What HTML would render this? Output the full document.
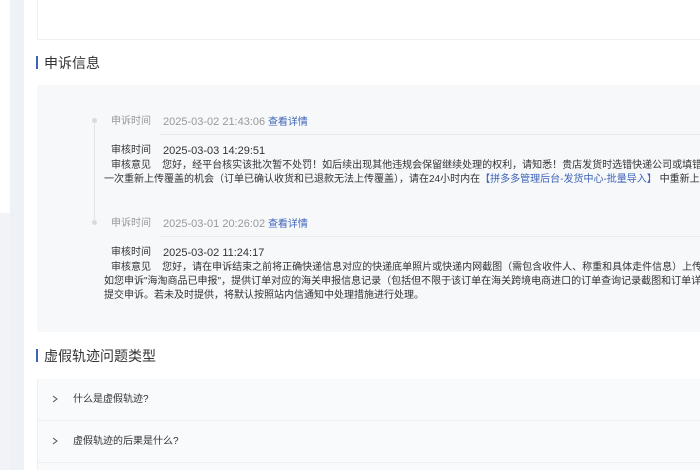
<!DOCTYPE html>
<html><head><meta charset="utf-8"><style>
*{margin:0;padding:0;box-sizing:border-box}
body{width:700px;height:470px;overflow:hidden;background:#fff;font-family:"Liberation Sans","Noto Sans CJK SC",sans-serif;position:relative}
.a{position:absolute;white-space:nowrap}
.t{font-size:10px;color:#333;line-height:12px}
.d{font-size:11px}
.g{color:#999}
.b{color:#3d63b8}
</style></head><body>
<div class="a" style="left:0;top:213px;width:10px;height:257px;background:#f1f3f6"></div>
<div class="a" style="left:10px;top:0;width:14px;height:470px;background:#eef1f6"></div>
<div class="a" style="left:37px;top:0;width:663px;height:40px;background:#fff;border:1px solid #eef0f3;border-top:none;border-right:none"></div>
<div class="a" style="left:36px;top:56px;width:2px;height:13px;background:#3d63b8"></div>
<div class="a" style="left:44px;top:53px;font-size:14px;color:#333">申诉信息</div>
<div class="a" style="left:37px;top:85px;width:663px;height:247px;background:#f7f8fa"></div>
<div class="a" style="left:94px;top:120px;width:1px;height:102px;background:#e2e4e8"></div>
<div class="a" style="left:92px;top:118px;width:5px;height:5px;border-radius:50%;background:#d8dade"></div>
<div class="a" style="left:92px;top:220px;width:5px;height:5px;border-radius:50%;background:#d8dade"></div>
<div class="a" style="left:160px;top:134px;width:540px;height:1px;background:#eaebee"></div>
<div class="a" style="left:160px;top:236px;width:540px;height:1px;background:#eaebee"></div>

<div class="a t g" style="left:111px;top:116px">申诉时间</div>
<div class="a t g" style="left:163px;top:116px"><span class="d">2025-03-02 21:43:06</span> <span class="b">查看详情</span></div>
<div class="a t" style="left:111px;top:145px">审核时间</div>
<div class="a t d" style="left:163px;top:145px">2025-03-03 14:29:51</div>
<div class="a t" style="left:111px;top:160px">审核意见&nbsp;&nbsp;&nbsp; 您好，经平台核实该批次暂不处罚！如后续出现其他违规会保留继续处理的权利，请知悉！贵店发货时选错快递公司或填错单号</div>
<div class="a t" style="left:104px;top:174px">一次重新上传覆盖的机会（订单已确认收货和已退款无法上传覆盖），请在24小时内在<span class="b">【拼多多管理后台-发货中心-批量导入】</span> 中重新上传</div>

<div class="a t g" style="left:111px;top:218px">申诉时间</div>
<div class="a t g" style="left:163px;top:218px"><span class="d">2025-03-01 20:26:02</span> <span class="b">查看详情</span></div>
<div class="a t" style="left:111px;top:247px">审核时间</div>
<div class="a t d" style="left:163px;top:247px">2025-03-02 11:24:17</div>
<div class="a t" style="left:111px;top:262px">审核意见&nbsp;&nbsp;&nbsp; 您好，请在申诉结束之前将正确快递信息对应的快递底单照片或快递内网截图（需包含收件人、称重和具体走件信息）上传至</div>
<div class="a t" style="left:104px;top:276px">如您申诉"海淘商品已申报"，提供订单对应的海关申报信息记录（包括但不限于该订单在海关跨境电商进口的订单查询记录截图和订单详情</div>
<div class="a t" style="left:104px;top:290px">提交申诉。若未及时提供，将默认按照站内信通知中处理措施进行处理。</div>

<div class="a" style="left:36px;top:349px;width:2px;height:13px;background:#3d63b8"></div>
<div class="a" style="left:44px;top:346px;font-size:14px;color:#333">虚假轨迹问题类型</div>
<div class="a" style="left:37px;top:379px;width:663px;height:91px;background:#f9fafb;border-left:1px solid #eef0f2"></div>
<div class="a" style="left:37px;top:420px;width:663px;height:1px;background:#eceef1"></div>
<div class="a" style="left:37px;top:462px;width:663px;height:1px;background:#eceef1"></div>
<svg class="a" style="left:52px;top:395px" width="6" height="8"><path d="M1 1L5 4L1 7" fill="none" stroke="#555" stroke-width="1"/></svg>
<div class="a t" style="left:73px;top:394px">什么是虚假轨迹?</div>
<svg class="a" style="left:52px;top:437px" width="6" height="8"><path d="M1 1L5 4L1 7" fill="none" stroke="#555" stroke-width="1"/></svg>
<div class="a t" style="left:73px;top:436px">虚假轨迹的后果是什么?</div>
</body></html>
